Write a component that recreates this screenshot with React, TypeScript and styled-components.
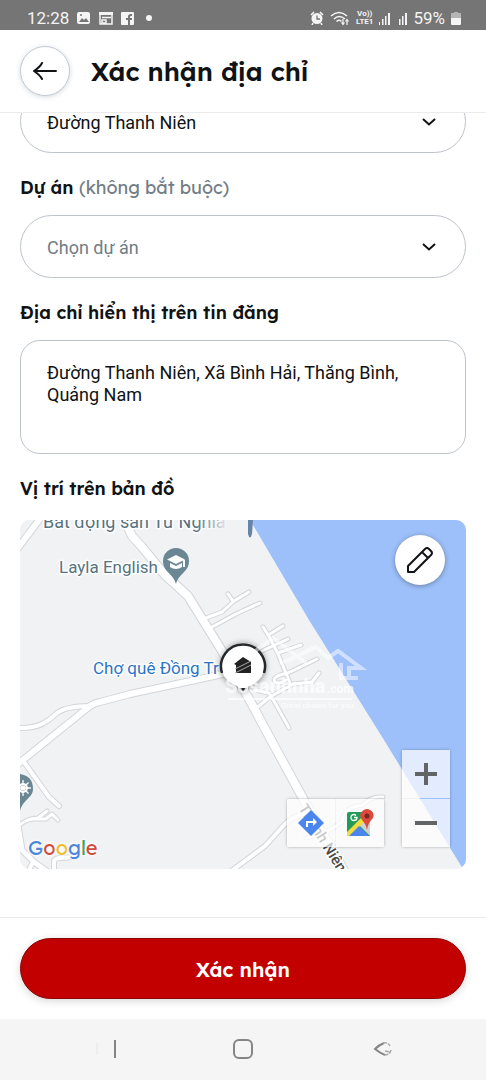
import React, { useState } from "react";
import styled, { createGlobalStyle, css } from "styled-components";

const display = `Lexend, Inter, "Noto Sans", sans-serif`;
const body = `Roboto, "Noto Sans", sans-serif`;

const GlobalStyle = createGlobalStyle`
  *, *::before, *::after { box-sizing: border-box; }
  body { margin: 0; background: #fff; color: #101214; font-family: ${body}; }
  button, select, textarea { font: inherit; color: inherit; }
`;

const Page = styled.div`
  display: flex;
  flex-direction: column;
  min-height: 100vh;
`;

const StatusBar = styled.div`
  display: flex;
  align-items: center;
  justify-content: space-between;
  height: 30px;
  padding: 6px 25px 0 27px;
  background: #757575;
  color: #f4f4f4;
  font-size: 17px;
  line-height: 24px;
`;

const StatusGroup = styled.div<{ $gap: number }>`
  display: flex;
  align-items: center;
  gap: ${(p) => p.$gap}px;

  svg { display: block; }
`;

const Network = styled.span`
  font-size: 8px;
  font-weight: 700;
  line-height: 8px;
  text-align: center;
`;

const Header = styled.header`
  display: flex;
  align-items: center;
  gap: 21px;
  height: 83px;
  padding: 0 20px;
  border-bottom: 1px solid #ececec;
`;

const roundButton = css`
  display: grid;
  place-items: center;
  width: 50px;
  height: 50px;
  padding: 0;
  border-radius: 50%;
  background: #fff;
`;

const BackButton = styled.button`
  ${roundButton}
  border: 1px solid #c3cad3;
  box-shadow: 0 1px 5px rgba(60, 80, 110, 0.22);
`;

const Title = styled.h1`
  margin: 0;
  padding-top: 2px;
  font: 600 26px/32px ${display};
`;

const Content = styled.main`
  flex: 1;
  overflow: hidden;
  padding: 0 20px 48px;
`;

/* The form is scrolled: its first field is partly under the header. */
const Form = styled.form`
  display: flex;
  flex-direction: column;
  gap: 23px;
  margin-top: -23px;
`;

const Field = styled.div`
  display: flex;
  flex-direction: column;
  gap: 15px;
`;

const labelText = css`
  margin: 0;
  font: 600 18px/24px ${display};
`;

const Label = styled.label`
  ${labelText}
`;

const SectionTitle = styled.h2`
  ${labelText}
`;

const Optional = styled.span`
  color: #717d87;
  font-weight: 400;
`;

const SelectWrap = styled.div`
  display: grid;
  align-items: center;

  > * { grid-area: 1 / 1; }
  svg { justify-self: end; margin-right: 29px; pointer-events: none; }
`;

const Select = styled.select<{ $empty?: boolean }>`
  appearance: none;
  width: 100%;
  height: 63px;
  padding: 1px 56px 0 26px;
  border: 1px solid #bcc3cb;
  border-radius: 32px;
  background: #fff;
  color: ${(p) => (p.$empty ? "#717d87" : "#101214")};
  font-size: 18px;
`;

const Address = styled.textarea`
  display: block;
  width: 100%;
  height: 114px;
  padding: 21px 26px;
  border: 1px solid #bcc3cb;
  border-radius: 20px;
  background: #fff;
  font-size: 18px;
  line-height: 22px;
  resize: none;
`;

const MapBox = styled.div`
  position: relative;
  height: 349px;
  margin-top: 4px;
  overflow: hidden;
  border-radius: 10px;
  background: #f0f2f4;
`;

const MapDrawing = styled.svg`
  display: block;
  width: 100%;
  height: 100%;
  font-family: ${body};
`;

const EditButton = styled.button`
  ${roundButton}
  position: absolute;
  top: 15px;
  right: 21px;
  border: 0;
  box-shadow: 0 1px 5px rgba(0, 0, 0, 0.35);
`;

const Controls = styled.div`
  position: absolute;
  right: 16px;
  bottom: 22px;
  display: flex;
  align-items: flex-end;
  gap: 18px;
`;

const ControlGroup = styled.div<{ $vertical?: boolean }>`
  display: flex;
  flex-direction: ${(p) => (p.$vertical ? "column" : "row")};
  gap: 1px;
  border-radius: 2px;
  box-shadow: 0 0 3px rgba(0, 0, 0, 0.3);
`;

const ControlButton = styled.button`
  display: grid;
  place-items: center;
  width: 48px;
  height: 48px;
  padding: 0;
  border: 0;
  background: rgba(255, 255, 255, 0.7);
`;

const GoogleMark = styled.div`
  position: absolute;
  left: 8px;
  bottom: 7px;
  font: 400 20px/28px ${display};
  text-shadow: 0 0 2px #fff, 0 0 3px #fff, 0 0 4px #fff;
`;

const Letter = styled.span<{ $color: string }>`
  color: ${(p) => p.$color};
`;

const Footer = styled.footer`
  padding: 20px;
  border-top: 1px solid #ebebeb;
`;

const Confirm = styled.button`
  display: block;
  width: 100%;
  height: 61px;
  padding: 3px 0 0;
  border: 1px solid #8d0404;
  border-radius: 31px;
  background: #c20000;
  color: #fff;
  font: 600 20px/28px ${display};
  box-shadow: 0 2px 8px rgba(0, 0, 0, 0.16);
`;

const NavBar = styled.nav`
  display: grid;
  grid-template-columns: repeat(3, 1fr);
  height: 61px;
  padding: 0 33px;
  background: #f5f5f5;
`;

const NavButton = styled.button`
  display: grid;
  place-items: center;
  padding: 0 0 2px;
  border: 0;
  background: none;
`;

const Chevron = () => (
  <svg width="16" height="16" viewBox="0 0 16 16" fill="none" stroke="#101214" strokeWidth="2">
    <path d="M2 5l6 5.5L14 5" />
  </svg>
);

const GOOGLE: [string, string][] = [
  ["G", "#4a86dc"],
  ["o", "#d04a3f"],
  ["o", "#eebc2b"],
  ["g", "#4a86dc"],
  ["l", "#3f9b57"],
  ["e", "#d04a3f"],
];

const STREETS: { d: string; w: number }[] = [
  { d: "M18 548L42 516", w: 6 },
  { d: "M20 728Q34 728 42 724Q50 720 57 713Q67 706 90 706", w: 4 },
  { d: "M18 764L90 706Q94 703 100 702L130 694L200 679L240 670", w: 6 },
  { d: "M24 762L39 783L49 797L59 806", w: 4 },
  { d: "M18 826Q28 818 38 818L47 811", w: 3 },
  { d: "M32 819L46 819L52 814L58 820", w: 3 },
  { d: "M18 826L22 850L34 862L48 872", w: 5 },
  { d: "M33 862L28 872", w: 4 },
  { d: "M54 872V862Q54 859 59 858L75 857", w: 4 },
  { d: "M230 872L265 846L285 824Q292 817 306 813", w: 4 },
  { d: "M383 797Q370 796 363 805Q344 807 342 822Q330 832 306 838", w: 3 },
  { d: "M206 618L222 612L234 601L249 592M228 594L233 601", w: 3 },
  { d: "M212 627L238 613L260 603", w: 3 },
  { d: "M263 627L270 638L278 654L290 683M270 634L283 626M262 651L288 639M278 653L301 645", w: 3 },
  { d: "M317 659L288 673L280 675Q272 678 275 682Q279 685 286 680", w: 3 },
  { d: "M319 673L312 682L293 684L270 697L254 710", w: 3 },
  { d: "M254 690L269 693L278 708L289 728", w: 3 },
  { d: "M119 508L132 536L142 547L165 575L188 596L222 651L248 697L270 738L306 804L346 874", w: 8 },
];

const MapPicture = () => (
  <MapDrawing viewBox="20 520 446 349" preserveAspectRatio="xMidYMid slice" role="img" aria-label="Bản đồ">
    <defs>
      <linearGradient id="label-fade" x1="0" x2="1">
        <stop offset="0" stopColor="#f0f2f4" stopOpacity="0" />
        <stop offset=".6" stopColor="#f0f2f4" stopOpacity=".9" />
        <stop offset="1" stopColor="#f0f2f4" />
      </linearGradient>
    </defs>
    <path d="M20 520h446v349H20z" fill="#f0f2f4" />
    <path d="M250 520L309 620L384 740L463 869H480V520z" fill="#9dc0fa" />
    <g fill="none" strokeLinejoin="round" strokeLinecap="round">
      {STREETS.map((s) => (
        <path key={s.d} d={s.d} stroke="#d3d5d9" strokeWidth={s.w + 2} />
      ))}
      {STREETS.map((s) => (
        <path key={s.d} d={s.d} stroke="#fff" strokeWidth={s.w} />
      ))}
    </g>
    <g fontSize="17" stroke="#fff" strokeWidth="3" strokeLinejoin="round" paintOrder="stroke">
      <text x="43" y="528" fontSize="18" fill="#57737f">Bất động sản Từ Nghĩa</text>
      <text x="59" y="573" fill="#57737f">Layla English</text>
      <text x="93" y="674" fill="#2c74c4">Chợ quê Đồng Tr</text>
      <text transform="translate(298 808) rotate(58)" fill="#4a4a4a" fontSize="15" fontWeight="500">
        Thanh Niên
      </text>
    </g>
    <path d="M196 520h50v14h-50z" fill="url(#label-fade)" />
    <path d="M176 584C173 573 163 572 163 561a13 13 0 0 1 26 0C189 572 179 573 176 584z" fill="#6b8794" />
    <path d="M176 555l9 4.5-9 4.5-9-4.5zM170 563v4q6 4 12 0v-4l-6 3zM183 560h2v7h-2z" fill="#fff" />
    <path d="M20 774q13 2 13 15c0 9-10 10-13 22z" fill="#6b8794" />
    <g fill="none" stroke="#fff" strokeWidth="2">
      <circle cx="23" cy="788" r="4" />
      <path d="M23 780v16M15 788h16M17.500 782.500l11 11M28.500 782.500l-11 11" strokeWidth="1.300" />
    </g>
    <path d="M248 520h5l-1 14q-2 7-4 0z" fill="#6684a8" />

    <path
      d="M243 692l-6-6A22 22 0 1 1 249 686z"
      fill="#fff"
      style={{ filter: "drop-shadow(0 1px 3px rgba(0,0,0,.5))" }}
    />
    <path d="M222 673A22 22 0 1 1 264 673" fill="none" stroke="#25282b" strokeWidth="2.500" />
    <path d="M239 688l4 4 4-4z" fill="#222" />
    <path d="M243 657l8 5v11h-15v-8l-2-1z" fill="#222" />
    <path d="M235 669l16-8M235 673l16-8" stroke="#aaa" strokeWidth="1" />

    <g fill="none" stroke="#fff" strokeWidth="4" opacity=".5">
      <path d="M246 658L273 638L306 663M280 664L316 647L328 658L338 651L361 668H349V678H358M341 663V678H350" />
    </g>
    <g fill="#fff" opacity=".7">
      <text x="225" y="693" fontSize="20" fontWeight="900">Sosanhnha</text>
      <text x="327" y="693" fontSize="12" fontWeight="700">.com</text>
      <text x="281" y="708" fontSize="8" fontWeight="700">Great choice for you</text>
      <path d="M228 698h124v2H228z" />
    </g>
  </MapDrawing>
);

const StatusIcons = () => (
  <>
    <svg width="14" height="14" viewBox="0 0 14 14">
      <rect x="0" y="1" width="13" height="12" rx="2" fill="#f4f4f4" />
      <path d="M2 11l3-4 2 2 2-2 3 4z" fill="#757575" />
      <circle cx="4" cy="4" r="1" fill="#757575" />
    </svg>
    <svg width="14" height="14" viewBox="0 0 14 14" fill="none" stroke="#f4f4f4">
      <path d="M0 2.500h14" strokeWidth="3" />
      <path d="M1 4v9h12V4M3 6.500h9M3 9h4v3H3z" strokeWidth="1.500" />
    </svg>
    <svg width="13" height="14" viewBox="0 0 13 14">
      <rect y="1" width="13" height="13" rx="1" fill="#f4f4f4" />
      <path d="M7 14V9H5V7h2V5.500Q7 3 10 3h1v2h-1q-1 0-1 1v1h2v2H9v5z" fill="#757575" />
    </svg>
  </>
);

const Bars = ({ faint }: { faint?: boolean }) => (
  <svg width="11" height="13" viewBox="0 0 11 13" fill="#f4f4f4">
    {!faint && <path d="M0 10h1v3H0z" />}
    <path d="M3 7h1.500v6H3zM6 4h1.500v9H6zM9 1h2v12H9z" />
  </svg>
);

export default function App() {
  const [street, setStreet] = useState("Đường Thanh Niên");
  const [project, setProject] = useState("");
  const [address, setAddress] = useState("Đường Thanh Niên, Xã Bình Hải, Thăng Bình, Quảng Nam");

  return (
    <Page>
      <GlobalStyle />
      <StatusBar>
        <StatusGroup $gap={8}>
          <span>12:28</span>
          <StatusIcons />
          <svg width="18" height="14" viewBox="0 0 18 14">
            <circle cx="7" cy="7" r="3" fill="#f4f4f4" />
          </svg>
        </StatusGroup>
        <StatusGroup $gap={6}>
          <svg width="14" height="14" viewBox="0 0 14 14">
            <circle cx="7" cy="7.500" r="5.500" fill="#f4f4f4" />
            <path d="M1 4l3-3M13 4l-3-3M3 12l-1 2M11 12l1 2" stroke="#f4f4f4" strokeWidth="1.600" />
            <path d="M7 4.500V8h3" fill="none" stroke="#757575" strokeWidth="1.300" />
          </svg>
          <svg width="20" height="15" viewBox="0 0 20 15" fill="none" stroke="#f4f4f4" strokeWidth="1.600">
            <path d="M1 5Q9-2 17 5M4 8q5-5 11 0M6.500 10.500q3-2.500 5 0" />
            <path d="M13 8v5M11.500 11.500l1.500 2 1.500-2M17 14V9M15.500 10.500L17 8.500l1.500 2" strokeWidth="1.200" />
          </svg>
          <Network>
            Vo))
            <br />
            LTE1
          </Network>
          <Bars />
          <Bars faint />
          <span>59%</span>
          <svg width="10" height="13" viewBox="0 0 10 13">
            <path d="M3 0h4v1h3v5H0V1h3z" fill="#b5b5b5" />
            <path d="M0 6h10v6q0 1-1 1H1q-1 0-1-1z" fill="#f4f4f4" />
          </svg>
        </StatusGroup>
      </StatusBar>

      <Header>
        <BackButton type="button" aria-label="Quay lại">
          <svg width="24" height="20" viewBox="0 0 24 20" fill="none" stroke="#101214" strokeWidth="2" strokeLinecap="round">
            <path d="M23 10H1M9 2Q7 6 1 10Q7 14 9 18" />
          </svg>
        </BackButton>
        <Title>Xác nhận địa chỉ</Title>
      </Header>

      <Content>
        <Form id="address-form" onSubmit={(e) => e.preventDefault()}>
          <SelectWrap>
            <Select aria-label="Đường" value={street} onChange={(e) => setStreet(e.target.value)}>
              <option>Đường Thanh Niên</option>
            </Select>
            <Chevron />
          </SelectWrap>

          <Field>
            <Label htmlFor="project">
              Dự án <Optional>(không bắt buộc)</Optional>
            </Label>
            <SelectWrap>
              <Select id="project" $empty={!project} value={project} onChange={(e) => setProject(e.target.value)}>
                <option value="">Chọn dự án</option>
              </Select>
              <Chevron />
            </SelectWrap>
          </Field>

          <Field>
            <Label htmlFor="address">Địa chỉ hiển thị trên tin đăng</Label>
            <Address id="address" value={address} onChange={(e) => setAddress(e.target.value)} />
          </Field>

          <Field>
            <SectionTitle>Vị trí trên bản đồ</SectionTitle>
            <MapBox>
              <MapPicture />
              <GoogleMark>
                {GOOGLE.map(([letter, color], i) => (
                  <Letter key={i} $color={color}>
                    {letter}
                  </Letter>
                ))}
              </GoogleMark>
              <EditButton type="button" aria-label="Sửa vị trí">
                <svg width="28" height="28" viewBox="0 0 28 28" fill="none" stroke="#101214" strokeWidth="2" strokeLinejoin="round">
                  <path d="M2 26V20L19 3Q21 1 23 3L25 5Q27 7 25 9L8 26zM16 6l6 6" />
                </svg>
              </EditButton>
              <Controls>
                <ControlGroup>
                  <ControlButton type="button" aria-label="Chỉ đường">
                    <svg width="26" height="26" viewBox="0 0 26 26">
                      <path d="M13 0L26 13L13 26L0 13z" fill="#4a86ee" />
                      <path d="M8 17v-6h7V8l4 4-4 4v-3h-5v4z" fill="#fff" />
                    </svg>
                  </ControlButton>
                  <ControlButton type="button" aria-label="Mở bản đồ">
                    <svg width="28" height="28" viewBox="0 0 28 28">
                      <path d="M1 5q0-2 2-2h21v24H3q-2 0-2-2z" fill="#229b58" />
                      <path d="M13 15L24 25V8z" fill="#cfd1d3" />
                      <path d="M1 23L17 7l4 4L4 27H1z" fill="#f5dc3e" />
                      <path d="M14 17L18 13L24 20V27z" fill="#cfd1d3" />
                      <path d="M3 27L13 17L23 27z" fill="#4a86ee" />
                      <path d="M8 8.500h3q0 3-3 3t-3-3 3-3q1 0 2 1" fill="none" stroke="#fff" strokeWidth="1.300" />
                      <path d="M21 21Q20 15 16 11a6.500 6.500 0 1 1 11-2Q22 14 21 21z" fill="#dc4a3d" />
                      <circle cx="21" cy="7" r="2.500" fill="#7a2720" />
                    </svg>
                  </ControlButton>
                </ControlGroup>
                <ControlGroup $vertical>
                  <ControlButton type="button" aria-label="Phóng to">
                    <svg width="22" height="22" viewBox="0 0 22 22" stroke="#626466" strokeWidth="4">
                      <path d="M0 11h22M11 0v22" />
                    </svg>
                  </ControlButton>
                  <ControlButton type="button" aria-label="Thu nhỏ">
                    <svg width="22" height="22" viewBox="0 0 22 22" stroke="#626466" strokeWidth="4">
                      <path d="M0 11h22" />
                    </svg>
                  </ControlButton>
                </ControlGroup>
              </Controls>
            </MapBox>
          </Field>
        </Form>
      </Content>

      <Footer>
        <Confirm type="submit" form="address-form">
          Xác nhận
        </Confirm>
      </Footer>

      <NavBar aria-label="Hệ thống">
        <NavButton type="button" aria-label="Gần đây">
          <svg width="26" height="20" viewBox="0 0 26 20" fill="none">
            <path d="M7 4v12" stroke="#e6e6e6" />
            <path d="M25 1v18" stroke="#858585" strokeWidth="2" />
          </svg>
        </NavButton>
        <NavButton type="button" aria-label="Trang chủ">
          <svg width="22" height="22" viewBox="0 0 22 22" fill="none" stroke="#858585" strokeWidth="2">
            <rect x="2" y="2" width="18" height="18" rx="5" />
          </svg>
        </NavButton>
        <NavButton type="button" aria-label="Trở về">
          <svg width="20" height="16" viewBox="0 0 20 16" fill="none" stroke="#858585" strokeWidth="2">
            <path d="M11 2Q6 4 2 8Q7 12 12 14" />
            <path d="M10 2Q15 1 17 5M18 9Q17 14 11 14M12 10l5 1" strokeWidth="1.500" stroke="#a8a8a8" strokeDasharray="4 1" />
          </svg>
        </NavButton>
      </NavBar>
    </Page>
  );
}
